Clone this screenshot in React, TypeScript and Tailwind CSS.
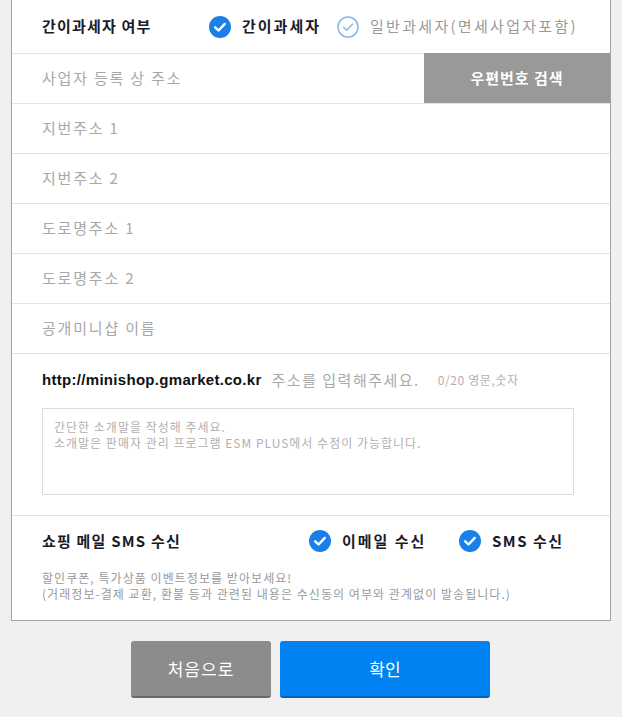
import React from "react";

const font = { fontFamily: '"Noto Sans CJK KR", "Noto Sans", sans-serif' };

function Check({ on }: { on: boolean }) {
  return on ? (
    <svg width="22" height="22" viewBox="0 0 22 22" className="shrink-0">
      <circle cx="11" cy="11" r="11" fill="#1a7fe6" />
      <path d="M6.2 11.3l3.3 3.2 6.3-6.6" fill="none" stroke="#fff" strokeWidth="2.4" strokeLinecap="round" strokeLinejoin="round" />
    </svg>
  ) : (
    <svg width="22" height="22" viewBox="0 0 22 22" className="shrink-0">
      <circle cx="11" cy="11" r="10" fill="#fff" stroke="#8cb8ea" strokeWidth="1.6" />
      <path d="M6.6 11.3l3.1 3 5.8-6.1" fill="none" stroke="#8cb8ea" strokeWidth="1.6" strokeLinecap="round" strokeLinejoin="round" />
    </svg>
  );
}

function FieldRow({ label }: { label: string }) {
  return (
    <div className="h-[50px] border-b border-[#e3e3e3] flex items-center pl-[30px] text-[15px] tracking-[1.8px] text-[#a8a8a8]">
      {label}
    </div>
  );
}

export default function App() {
  return (
    <div className="min-h-[717px] bg-[#f0f0f0] flex flex-col items-center" style={font}>
      <div className="w-[600px] bg-white border-x border-b border-[#a3a3a3]">
        {/* 과세 유형 */}
        <div className="h-[54px] border-b border-[#e3e3e3] flex items-center pl-[30px] text-[15px]">
          <span className="font-bold text-[#1a1a2a] tracking-[1.2px] w-[167px]">간이과세자 여부</span>
          <Check on />
          <span className="ml-[11px] font-bold text-[#1a1a2a] tracking-[2px] w-[95px]">간이과세자</span>
          <Check on={false} />
          <span className="ml-[11px] text-[#9a9a9a] tracking-[2.3px]">일반과세자(면세사업자포함)</span>
        </div>

        {/* 사업장 주소 */}
        <div className="h-[50px] border-b border-[#e3e3e3] flex items-stretch">
          <div className="flex-1 flex items-center pl-[30px] text-[15px] tracking-[1.8px] text-[#a8a8a8]">사업자 등록 상 주소</div>
          <button className="w-[186px] bg-[#999999] text-white text-[15px] font-bold tracking-[1px] -mt-px">
            우편번호 검색
          </button>
        </div>
        <FieldRow label="지번주소 1" />
        <FieldRow label="지번주소 2" />
        <FieldRow label="도로명주소 1" />
        <FieldRow label="도로명주소 2" />
        <FieldRow label="공개미니샵 이름" />

        {/* 미니샵 주소 + 소개말 */}
        <div className="border-b border-[#e3e3e3] pt-[16px] pb-[20px] px-[30px]">
          <div className="flex items-center h-[20px]">
            <span className="text-[15px] text-[#111] font-bold tracking-[0.3px]" style={{ fontFamily: '"Liberation Sans", Arial, sans-serif' }}>
              http://minishop.gmarket.co.kr
            </span>
            <span className="ml-[10px] text-[15px] text-[#aaaaaa] tracking-[1.5px]">주소를 입력해주세요.</span>
            <span className="ml-[18px] text-[12px] text-[#b0b0b0] tracking-[0.6px]">0/20 영문,숫자</span>
          </div>
          <div className="mt-[18px] w-[532px] h-[87px] border border-[#dcdcdc] px-[11px] pt-[10px] text-[12px] leading-[16px] tracking-[1px] text-[#b0b0b0]">
            <div>간단한 소개말을 작성해 주세요.</div>
            <div>소개말은 판매자 관리 프로그램 ESM PLUS에서 수정이 가능합니다.</div>
          </div>
        </div>

        {/* 쇼핑 메일 수신 */}
        <div className="pt-[14px] pb-[18px] px-[30px]">
          <div className="flex items-center h-[22px] text-[15px]">
            <span className="font-bold text-[#1a1a2a] tracking-[1.2px] w-[267px]">쇼핑 메일 SMS 수신</span>
            <Check on />
            <span className="ml-[11px] font-bold text-[#1a1a2a] tracking-[2px] w-[117px]">이메일 수신</span>
            <Check on />
            <span className="ml-[11px] font-bold text-[#1a1a2a] tracking-[1.5px]">SMS 수신</span>
          </div>
          <div className="mt-[18px] text-[12px] leading-[16px] tracking-[1.05px] text-[#9a9a9a]">
            <div>할인쿠폰, 특가상품 이벤트정보를 받아보세요!</div>
            <div>(거래정보-결제 교환, 환불 등과 관련된 내용은 수신동의 여부와 관계없이 발송됩니다.)</div>
          </div>
        </div>
      </div>

      <div className="mt-[20px] w-full flex pl-[131px] gap-[9px]">
        <button className="w-[140px] h-[57px] rounded-[3px] bg-[#8c8c8c] border-b-2 border-[#6a6a6a] text-white text-[17px] tracking-[1px]">
          처음으로
        </button>
        <button className="w-[210px] h-[57px] rounded-[3px] bg-[#0082f0] border-b-2 border-[#0860b8] text-white text-[17px]">
          확인
        </button>
      </div>
    </div>
  );
}
